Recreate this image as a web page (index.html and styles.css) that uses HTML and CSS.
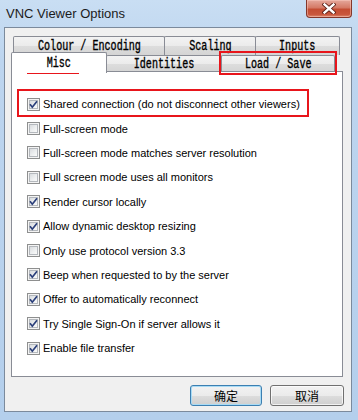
FILE: index.html
```html
<!DOCTYPE html>
<html>
<head>
<meta charset="utf-8">
<link rel="stylesheet" href="styles.css">
</head>
<body>
<div class="window">
  <div class="titlebar">
    <span class="title">VNC Viewer Options</span>
    <div class="close">
      <svg width="14" height="11" viewBox="0 0 14 11">
        <path d="M2.5 1.5 L11.5 9.5 M11.5 1.5 L2.5 9.5" stroke="#5a1d14" stroke-width="4.2" stroke-linecap="square" fill="none"/>
        <path d="M2.5 1.5 L11.5 9.5 M11.5 1.5 L2.5 9.5" stroke="#ffffff" stroke-width="2.4" stroke-linecap="square" fill="none"/>
      </svg>
    </div>
  </div>
  <div class="client">
    <div class="tabs">
      <div class="row back">
        <div class="tab t-colour"><span class="tl">Colour / Encoding</span></div>
        <div class="tab t-scaling"><span class="tl">Scaling</span></div>
        <div class="tab t-inputs"><span class="tl">Inputs</span></div>
      </div>
      <div class="row front">
        <div class="tab sel t-misc"><span class="tl">Misc</span></div>
        <div class="tab t-ident"><span class="tl">Identities</span></div>
        <div class="tab t-load"><span class="tl">Load / Save</span></div>
      </div>
    </div>
    <div class="panel">
      <div class="opt"><span class="cb on"><svg class="ck" width="9" height="9" viewBox="0 0 9 9"><path d="M1 4.3 L3.3 7.2 L8 1.2" stroke="#2b3f7a" stroke-width="1.7" fill="none"/></svg></span><span class="lbl">Shared connection (do not disconnect other viewers)</span></div>
      <div class="opt"><span class="cb"></span><span class="lbl">Full-screen mode</span></div>
      <div class="opt"><span class="cb"></span><span class="lbl">Full-screen mode matches server resolution</span></div>
      <div class="opt"><span class="cb"></span><span class="lbl">Full screen mode uses all monitors</span></div>
      <div class="opt"><span class="cb on"><svg class="ck" width="9" height="9" viewBox="0 0 9 9"><path d="M1 4.3 L3.3 7.2 L8 1.2" stroke="#2b3f7a" stroke-width="1.7" fill="none"/></svg></span><span class="lbl">Render cursor locally</span></div>
      <div class="opt"><span class="cb on"><svg class="ck" width="9" height="9" viewBox="0 0 9 9"><path d="M1 4.3 L3.3 7.2 L8 1.2" stroke="#2b3f7a" stroke-width="1.7" fill="none"/></svg></span><span class="lbl">Allow dynamic desktop resizing</span></div>
      <div class="opt"><span class="cb"></span><span class="lbl">Only use protocol version 3.3</span></div>
      <div class="opt"><span class="cb on"><svg class="ck" width="9" height="9" viewBox="0 0 9 9"><path d="M1 4.3 L3.3 7.2 L8 1.2" stroke="#2b3f7a" stroke-width="1.7" fill="none"/></svg></span><span class="lbl">Beep when requested to by the server</span></div>
      <div class="opt"><span class="cb on"><svg class="ck" width="9" height="9" viewBox="0 0 9 9"><path d="M1 4.3 L3.3 7.2 L8 1.2" stroke="#2b3f7a" stroke-width="1.7" fill="none"/></svg></span><span class="lbl">Offer to automatically reconnect</span></div>
      <div class="opt"><span class="cb on"><svg class="ck" width="9" height="9" viewBox="0 0 9 9"><path d="M1 4.3 L3.3 7.2 L8 1.2" stroke="#2b3f7a" stroke-width="1.7" fill="none"/></svg></span><span class="lbl">Try Single Sign-On if server allows it</span></div>
      <div class="opt"><span class="cb on"><svg class="ck" width="9" height="9" viewBox="0 0 9 9"><path d="M1 4.3 L3.3 7.2 L8 1.2" stroke="#2b3f7a" stroke-width="1.7" fill="none"/></svg></span><span class="lbl">Enable file transfer</span></div>
    </div>
    <div class="buttons">
      <button class="btn default">确定</button>
      <button class="btn">取消</button>
    </div>
  </div>
  <div class="mark mark-misc"></div>
  <div class="mark mark-load"></div>
  <div class="mark mark-shared"></div>
</div>
</body>
</html>
```

FILE: styles.css
```css
html, body {
  margin: 0;
  padding: 0;
}
body {
  width: 358px;
  height: 420px;
  overflow: hidden;
  font-family: "Liberation Sans", Arial, sans-serif;
}
.window {
  position: relative;
  width: 358px;
  height: 420px;
  box-sizing: border-box;
  background: linear-gradient(180deg, #c9def3 0px, #bdd5ef 60px, #b4cfec 420px);
  display: flex;
  flex-direction: column;
}
.titlebar {
  height: 27px;
  display: flex;
  align-items: flex-start;
  padding: 0 6px 0 6px;
  box-sizing: border-box;
}
.title {
  font-family: "Liberation Sans", Arial, sans-serif;
  font-size: 13px;
  color: #1b1b1b;
  padding-top: 6px;
  line-height: 15px;
}
.close {
  margin-left: auto;
  width: 46px;
  height: 18px;
  box-sizing: border-box;
  border: 1px solid #84372b;
  border-top: none;
  border-radius: 0 0 4px 4px;
  background: linear-gradient(180deg, #e5a89c 0%, #d57a66 45%, #c44d33 55%, #c9573d 85%, #dd8a70 100%);
  box-shadow: inset 0 0 0 1px rgba(255, 210, 200, 0.45);
  display: flex;
  align-items: center;
  justify-content: center;
}
.close svg {
  display: block;
}
.client {
  margin: 0 6px 0 4px;
  height: 385px;
  box-sizing: border-box;
  border: 1px solid #7b8a9c;
  background: #f0f0f0;
  padding: 8px 0 0 6px;
  display: flex;
  flex-direction: column;
}
.tabs {
  width: 332px;
}
.row {
  display: flex;
}
.row.back {
  height: 19px;
  padding-left: 2px;
}
.row.front {
  height: 17px;
}
.tab {
  box-sizing: border-box;
  border: 1px solid #898c95;
  border-bottom: none;
  border-radius: 2px 2px 0 0;
  background: linear-gradient(180deg, #f3f3f3 0%, #ebebeb 50%, #dddddd 51%, #d4d4d4 100%);
  display: flex;
  justify-content: center;
  align-items: flex-start;
  overflow: hidden;
  color: #000;
}
.row.back .tab { height: 19px; }
.row.front .tab { height: 17px; }
.t-colour { width: 152px; }
.t-scaling { width: 92px; margin-left: -1px; }
.t-inputs { width: 85px; margin-left: -1px; }
.t-misc { width: 96px; }
.t-ident { width: 116px; }
.t-load { width: 114px; margin-left: -1px; }
.tab.sel {
  position: relative;
  z-index: 1;
  margin-top: -3px;
  height: 21px !important;
  background: #ffffff;
  margin-right: -1px;
}
.tl {
  display: inline-block;
  font-family: "Liberation Mono", "Courier New", monospace;
  font-size: 14px;
  line-height: 16px;
  font-weight: normal;
  -webkit-text-stroke: 0.35px #000;
  transform: scaleX(0.72);
  white-space: nowrap;
  margin-top: 1px;
}
.row.front .tl {
  margin-top: 0;
}
.tab.sel .tl {
  margin-top: 2px;
}
.panel {
  width: 332px;
  height: 306px;
  margin-top: -1px;
  box-sizing: border-box;
  border: 1px solid #898c95;
  background: #ffffff;
  padding: 20px 0 0 15px;
}
.opt {
  height: 24.4px;
  display: flex;
  align-items: center;
}
.cb {
  width: 13px;
  height: 13px;
  box-sizing: border-box;
  border: 1px solid #8e8f8f;
  background: #f4f4f4;
  position: relative;
  display: flex;
  align-items: center;
  justify-content: center;
  flex: none;
}
.cb::before {
  content: "";
  position: absolute;
  left: 1px;
  top: 1px;
  width: 9px;
  height: 9px;
  box-sizing: border-box;
  border: 1px solid #b4b8bd;
  background: linear-gradient(135deg, #d9dcdf 0%, #eef0f1 60%, #fafafa 100%);
}
.ck {
  position: relative;
  display: block;
}
.lbl {
  margin-left: 3px;
  font-size: 11px;
  color: #000;
  white-space: nowrap;
  line-height: 14px;
}
.buttons {
  display: flex;
  justify-content: flex-end;
  gap: 8px;
  padding-right: 7px;
  margin-top: 8px;
}
.btn {
  width: 72px;
  height: 21px;
  box-sizing: border-box;
  border: 1px solid #707070;
  border-radius: 3px;
  background: linear-gradient(180deg, #f2f2f2 0%, #ebebeb 50%, #dddddd 51%, #cfcfcf 100%);
  box-shadow: inset 0 0 0 1px rgba(255, 255, 255, 0.7);
  font-family: "Noto Sans CJK SC", "Noto Sans", sans-serif;
  font-size: 12px;
  line-height: 16px;
  color: #000;
  padding: 0;
  margin: 0;
}
.btn.default {
  border-color: #3c7fb1;
  box-shadow: inset 0 0 0 1px #a8dbf5;
}
.btn:last-child {
  width: 74px;
}
.mark {
  position: absolute;
  border: 2px solid #e8151b;
  box-sizing: border-box;
  pointer-events: none;
}
.mark-misc {
  left: 27px;
  top: 56px;
  width: 52px;
  height: 18px;
}
.mark-load {
  left: 219px;
  top: 51px;
  width: 118px;
  height: 24px;
}
.mark-shared {
  left: 17px;
  top: 89px;
  width: 292px;
  height: 28px;
}
```
